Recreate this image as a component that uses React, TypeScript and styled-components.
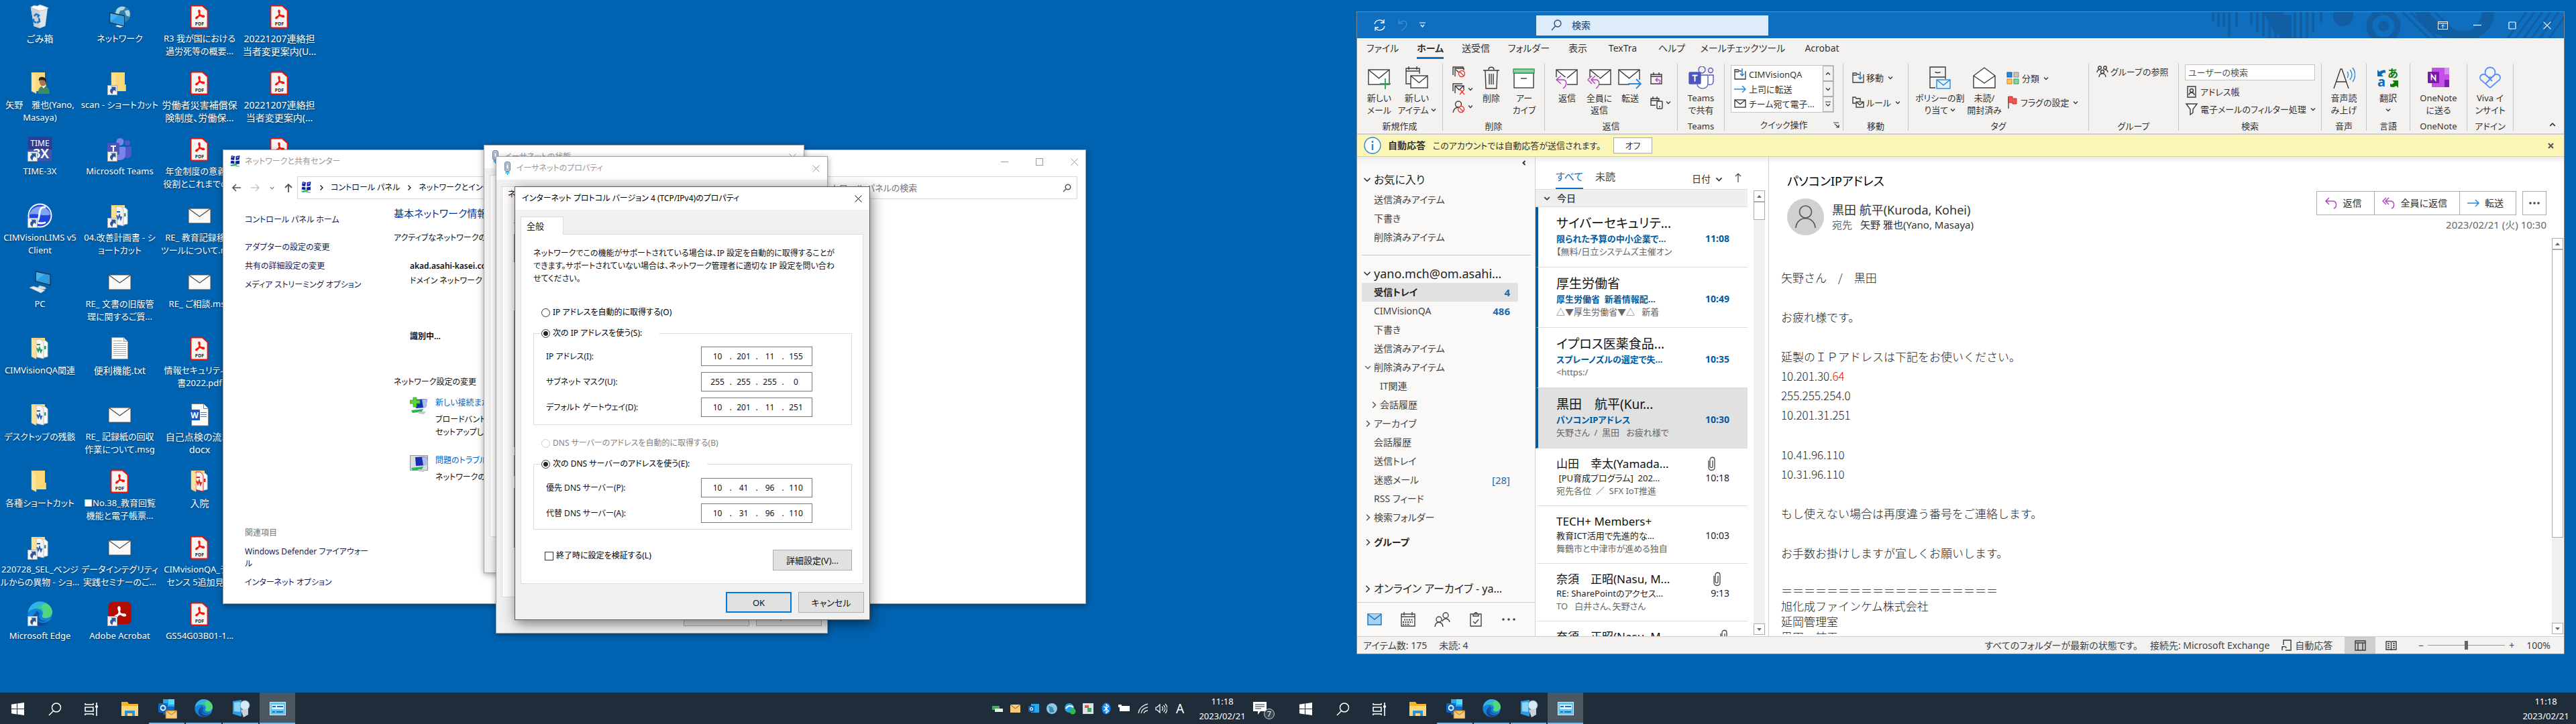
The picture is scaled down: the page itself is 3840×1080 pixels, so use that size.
import React from 'react';
import styled, { createGlobalStyle, css } from 'styled-components';

const Global = createGlobalStyle`
  * { box-sizing: border-box; }
  html, body { margin: 0; padding: 0; height: 100%; }
  body {
    font-family: "Noto Sans", "Noto Sans CJK JP", sans-serif;
    font-size: 13px;
    line-height: 18px;
    font-feature-settings: "palt";
    color: #111;
    overflow: hidden;
  }
  button, input, select { font: inherit; font-feature-settings: inherit; color: inherit; margin: 0; padding: 0; border: 0; border-radius: 0; background: none; }
  p, h1, h2, h3, ul, dl { margin: 0; padding: 0; font-size: inherit; font-weight: inherit; }
  li { list-style: none; }
  a { color: inherit; text-decoration: none; }
  svg { display: block; flex: none; }
`;

/* ---------- shared ---------- */

const Desktop = styled.main`
  position: relative;
  display: flex;
  flex-direction: column;
  height: 100vh;
  background: #0063b1;
  overflow: hidden;
`;

const IconGrid = styled.ul`
  flex: 1;
  display: grid;
  grid-auto-flow: column;
  grid-template-rows: repeat(10, 99px);
  grid-auto-columns: 119px;
  min-height: 0;
`;

const Shortcut = styled.li`
  display: flex;
  flex-direction: column;
  align-items: center;
  gap: 5px;
  padding-top: 6px;
`;

const ShortcutLabel = styled.span<{ $latin?: boolean }>`
  color: #fff;
  font-size: ${p => (p.$latin ? 13 : 14)}px;
  line-height: 19px;
  white-space: pre;
  text-align: center;
  text-shadow: 0 1px 2px rgba(0, 0, 0, 0.5);
`;

const Row = styled.div<{ $gap?: number; $h?: number; $align?: string; $justify?: string; $pad?: string }>`
  display: flex;
  align-items: ${p => p.$align ?? 'center'};
  justify-content: ${p => p.$justify ?? 'flex-start'};
  gap: ${p => p.$gap ?? 0}px;
  padding: ${p => p.$pad ?? '0'};
  ${p => p.$h && css`height: ${p.$h}px;`}
`;

/* ---------- desktop icons ---------- */

const Arrow = () => (
  <g>
    <rect x="0.5" y="22.5" width="14" height="14" fill="#f4f4f4" stroke="#a9a9a9" />
    <path d="M5 24.500h7.500v7l-2.400-2.200c-2 1.700-2.600 3.700-2.300 6.200-5-2.800-4.700-7.200-.6-9.300z" fill="#2b5797" />
  </g>
);

const Ico37 = ({ children, link }: { children: React.ReactNode; link?: boolean }) => (
  <svg width="37" height="37" viewBox="0 0 37 37" aria-hidden="true">
    {children}
    {link && <Arrow />}
  </svg>
);

const AcroMark = ({ c = '#fa0f00', x = 0, y = 0, k = 1 }: { c?: string; x?: number; y?: number; k?: number }) => (
  <path
    transform={`translate(${x} ${y}) scale(${k})`}
    fill="none"
    stroke={c}
    strokeWidth="1.700"
    strokeLinejoin="round"
    d="M6.500 1c-1.400 0-1 3 .4 5.500 1.400 2.600 3.600 4.600 5.600 4.800 2 .1 2-1.500.2-1.900-2.600-.5-7.300.3-9.600 1.500-2.200 1.200-2.200 3-.8 2.700C4 13.200 6 9.400 6.900 6.500 7.600 4 7.700 1 6.500 1z"
  />
);

const Pdf = ({ link }: { link?: boolean }) => (
  <Ico37 link={link}>
    <path d="M8 2.500h14.500l8 7V34a1.500 1.500 0 0 1-1.500 1.500H8A2.500 2.500 0 0 1 5.500 33V5A2.500 2.500 0 0 1 8 2.500z" fill="#f7f5f4" stroke="#f40f02" strokeWidth="1.800" />
    <AcroMark x={11.5} y={8} k={1} />
    <text x="18.500" y="31.500" fontSize="7" fontWeight="700" textAnchor="middle" fill="#2c2c2c" fontFamily="Noto Sans, sans-serif">PDF</text>
  </Ico37>
);

const Mail = () => (
  <Ico37>
    <rect x="2" y="8" width="33" height="22" fill="#fafafa" stroke="#4a4a4a" />
    <path d="M2 8l16.500 12L35 8" fill="none" stroke="#4a4a4a" strokeWidth="1.200" />
  </Ico37>
);

const Folder = ({ kind, link }: { kind?: 'user' | 'green' | 'blue' | 'red'; link?: boolean }) => {
  const c = kind === 'green' ? '#1f9d57' : kind === 'red' ? '#e2231a' : '#2b5fb4';
  return (
    <Ico37 link={link}>
      <path d="M6 3h20v18h1.500v10H6z" fill="#f7cf6b" />
      <path d="M6 3h20v18h1.500v10H12z" fill="#fbd978" />
      {kind && kind !== 'user' && (
        <g>
          <path d="M20 7h6.500l3.500 3v21l-9 2z" fill="#fdfdfd" stroke="#c9c9c9" />
          <path d="M13 5h7l4 5v24l-11-2.500z" fill="#f5f5f5" stroke={kind === 'red' ? '#e2231a' : '#bdbdbd'} />
          <path d="M14 18l2 5 2-5 2 6 1.500-4M14 13h5" stroke={c} strokeWidth="2" fill="none" />
          <path d="M25 15h2.500v5H25z" fill={kind === 'blue' ? '#2f9d62' : c} />
        </g>
      )}
      <path d="M6 3l7 4v27.500L6 31z" fill="#fbe19a" stroke="#eec75f" strokeWidth="0.500" />
      {kind === 'user' && (
        <g>
          <path d="M16 35c-1-8 4-12 8-12s9 3 9 12z" fill="#3f8a5f" />
          <path d="M21 23l3 4 3-4z" fill="#fff" />
          <ellipse cx="23" cy="17" rx="5" ry="6.500" fill="#a9744f" />
          <path d="M17 16c-1-6 3-7 6.500-6s5.500 4 4 9l-2-4c-3 0-6-2-8.500 1z" fill="#2b2320" />
        </g>
      )}
    </Ico37>
  );
};

const Bin = () => (
  <Ico37>
    <path d="M5 6l25 .5-3.500 26.500-8 3-9-3z" fill="#dfe4e8" />
    <path d="M5 6l13 3v27l-8.500-3z" fill="#c9d0d6" />
    <path d="M4.500 5l5-3 5 1 4-2 6 2 7 3-7 3-7 1z" fill="#fafbfc" stroke="#aab2b8" strokeWidth="0.600" />
    <path d="M10 18l3-3 4 2-2 3M17 21l1 5-4 2M9 22l0 4 4 2" stroke="#1577c9" strokeWidth="2.600" fill="none" />
  </Ico37>
);

const Monitor = ({ x = 0, y = 0 }: { x?: number; y?: number }) => (
  <g transform={`translate(${x} ${y})`}>
    <path d="M0 0l23 5v17L0 16z" fill="#22303a" />
    <path d="M1.300 1.800l20.400 4.500v13.800L1.300 15z" fill="#43b3f0" />
    <path d="M1.300 15L14 4.600l7.700 1.700v13.800z" fill="#2c9be4" />
  </g>
);

const NetworkIcon = () => (
  <Ico37>
    <circle cx="22.500" cy="15.500" r="12" fill="#2f7fa8" />
    <path d="M14 8c4-5 9-5 13-3l-3 4-5 1-2 5-5-1zM26 10l6-1c2 3 2 7 1 10l-5-2z" fill="#a9d9df" />
    <path d="M12 33l8-5 5 2v3l-6 2z" fill="#e4e8ea" />
    <Monitor x={3} y={12} />
  </Ico37>
);

const PcIcon = () => (
  <Ico37>
    <Monitor x={11.5} y={2} />
    <path d="M18 24l8 2 2 3-8 1-6-2z" fill="#d5dade" />
    <path d="M3 27l6-2 17 6-6 4z" fill="#e8ecee" stroke="#aab2b8" strokeWidth="0.600" />
  </Ico37>
);

const TxtIcon = () => (
  <Ico37>
    <path d="M6.500 2.500h18l6 6v26h-24z" fill="#fbfbfb" stroke="#9a9a9a" />
    <path d="M24.500 2.500v6h6" fill="#e3e3e3" stroke="#9a9a9a" />
    <path d="M9 7.500h13M9 11.500h19M9 14.500h19M9 17.500h19M9 20.500h19M9 23.500h19M9 26.500h19M9 29.500h19" stroke="#a8adb0" />
  </Ico37>
);

const WordIcon = () => (
  <Ico37>
    <path d="M6.500 2.500h18l7 7v25.500h-25z" fill="#fdfdfd" stroke="#7d7d7d" />
    <path d="M24.500 2.500v7h7" fill="#fff" stroke="#7d7d7d" />
    <path d="M20 15.500h9M20 18.500h9M20 21.500h9" stroke="#3c7bd4" />
    <rect x="3" y="11" width="16" height="16" rx="1" fill="#185abd" />
    <text x="11" y="23.500" fontSize="12" fontWeight="700" textAnchor="middle" fill="#fff" fontFamily="Noto Sans, sans-serif">W</text>
  </Ico37>
);

const TimeIcon = () => (
  <Ico37 link>
    <rect x="0.500" y="0.500" width="36" height="36" fill="#323c8e" />
    <rect x="1" y="19" width="35.500" height="17.500" fill="#4058ac" />
    <text x="18.500" y="14" fontSize="12" textAnchor="middle" fill="#fff" fontFamily="Noto Sans, sans-serif">TIME</text>
    <text x="20" y="32" fontSize="20" fontWeight="600" textAnchor="middle" fill="#fff" fontFamily="Noto Sans, sans-serif">3X</text>
  </Ico37>
);

const TeamsShape = () => (
  <g>
    <circle cx="19" cy="7.500" r="5.500" fill="#7b83eb" />
    <circle cx="30" cy="9" r="4" fill="#5059c9" />
    <path d="M24 15h12v10c0 5-3 7-6 7s-6-2-6-6z" fill="#5059c9" />
    <path d="M10 15h17v11c0 6-4 9-8.500 9S10 32 10 26z" fill="#7b83eb" />
    <rect x="0" y="9" width="18" height="18" rx="1.500" fill="#4b53bc" />
    <path d="M5 14h8M9 14v10" stroke="#fff" strokeWidth="2.200" />
  </g>
);

const LimsIcon = () => (
  <Ico37 link>
    <circle cx="18.500" cy="18.500" r="18" fill="#f3f6ff" />
    <circle cx="18.500" cy="18.500" r="16" fill="#2147d9" />
    <path d="M3 17a16 16 0 0 1 31 0c-8 4-22-3-31 0z" fill="#7fa4f5" />
    <path d="M26 6c-7-1-8 6-8.500 12S15 29 11 29c6 1 11 2 15 0" fill="none" stroke="#fff" strokeWidth="2.800" strokeLinecap="round" />
  </Ico37>
);

const EdgeShape = () => (
  <g>
    <circle cx="18.500" cy="18.500" r="18" fill="#1583d6" />
    <path d="M1 16C3 6 10 .5 18.500.5 29 .5 37 8 37 16c0 5-4 9-10 9-4 0-6-2-5-4 3-5-2-10-8-10C8 11 3 13 1 16z" fill="#35c1b0" />
    <path d="M24 1.500C32 4 37 10 37 16c0 5-4 9-10 9-4 0-6-2-5-4 3-5 2-9-1-12z" fill="#5fe06a" opacity="0.700" />
    <path d="M1 16C3 7 10 .5 18 .5c4 0 8 1 11 3C20 3 12 6 8 12c-3 0-5 2-7 4z" fill="#2fb0f0" />
    <path d="M14 17c-4 8 3 17 12 15 3-.5 5-2 7-4-3 6-9 9-15 8.500C9 35 6 27 9 21c1-2 3-3.500 5-4z" fill="#0f4a92" />
    <path d="M14 14c-3 2-3 8 0 12 3 4 9 6 14 3-5 1-11-2-11-7 0-2 1-3 1.500-4z" fill="#0d59a8" />
  </g>
);

const AcrobatIcon = () => (
  <Ico37 link>
    <rect x="1.500" y="1" width="34" height="33" rx="6" fill="#b30b00" />
    <AcroMark c="#fff" x={9} y={7} k={1.3} />
  </Ico37>
);

const shortcuts: { icon: React.ReactNode; text: string; latin?: boolean }[] = [
  { icon: <Bin />, text: 'ごみ箱' },
  { icon: <Folder kind="user" />, text: '矢野\u3000雅也(Yano,\nMasaya)', latin: true },
  { icon: <TimeIcon />, text: 'TIME-3X', latin: true },
  { icon: <LimsIcon />, text: 'CIMVisionLIMS v5\nClient', latin: true },
  { icon: <PcIcon />, text: 'PC', latin: true },
  { icon: <Folder kind="green" />, text: 'CIMVisionQA関連', latin: true },
  { icon: <Folder kind="blue" />, text: 'デスクトップの残骸', latin: true },
  { icon: <Folder />, text: '各種ショートカット', latin: true },
  { icon: <Folder kind="blue" link />, text: '220728_SEL_ベンジ\nルからの異物 - ショ...', latin: true },
  { icon: <Ico37 link><EdgeShape /></Ico37>, text: 'Microsoft Edge', latin: true },
  { icon: <NetworkIcon />, text: 'ネットワーク', latin: true },
  { icon: <Folder link />, text: 'scan - ショートカット', latin: true },
  { icon: <Ico37 link><TeamsShape /></Ico37>, text: 'Microsoft Teams', latin: true },
  { icon: <Folder kind="blue" link />, text: '04.改善計画書 - シ\nョートカット', latin: true },
  { icon: <Mail />, text: 'RE_ 文書の旧版管\n理に関するご質...', latin: true },
  { icon: <TxtIcon />, text: '便利機能.txt' },
  { icon: <Mail />, text: 'RE_ 記録紙の回収\n作業について.msg', latin: true },
  { icon: <Pdf />, text: '■No.38_教育回覧\n機能と電子帳票...', latin: true },
  { icon: <Mail />, text: 'データインテグリティ\n実践セミナーのご...', latin: true },
  { icon: <AcrobatIcon />, text: 'Adobe Acrobat', latin: true },
  { icon: <Pdf />, text: 'R3 我が国における\n過労死等の概要...', latin: true },
  { icon: <Pdf />, text: '労働者災害補償保\n険制度、労働保...' },
  { icon: <Pdf />, text: '年金制度の意義と\n役割とこれまでの...', latin: true },
  { icon: <Mail />, text: 'RE_ 教育記録移管\nツールについて.msg', latin: true },
  { icon: <Mail />, text: 'RE_ ご相談.msg', latin: true },
  { icon: <Pdf />, text: '情報セキュリティ白\n書2022.pdf', latin: true },
  { icon: <WordIcon />, text: '自己点検の流れ.\ndocx' },
  { icon: <Folder kind="red" />, text: '入院' },
  { icon: <Pdf />, text: 'CIMvisionQA_ライ\nセンス 5追加見積', latin: true },
  { icon: <Pdf />, text: 'GS54G03B01-1...', latin: true },
  { icon: <Pdf />, text: '20221207連絡担\n当者変更案内(U...' },
  { icon: <Pdf />, text: '20221207連絡担\n当者変更案内(...' },
  { icon: <Pdf />, text: '' },
];

/* ---------- classic windows ---------- */

const Win = styled.section<{ $x: number; $y: number; $w: number; $h: number; $active?: boolean; $bg?: string }>`
  position: absolute;
  left: ${p => p.$x}px;
  top: ${p => p.$y}px;
  width: ${p => p.$w}px;
  height: ${p => p.$h}px;
  display: flex;
  flex-direction: column;
  background: ${p => p.$bg ?? '#f0f0f0'};
  border: 1px solid ${p => (p.$active ? '#5a5a5a' : '#a0a4a8')};
  box-shadow: ${p => (p.$active ? '2px 5px 18px rgba(0,0,0,.5)' : '0 2px 9px rgba(0,0,0,.38)')};
  font-size: 12px;
  white-space: nowrap;
`;

const TitleBar = styled.header<{ $dim?: boolean; $pad?: number }>`
  display: flex;
  align-items: center;
  flex: none;
  gap: 6px;
  height: 34px;
  padding: 0 10px 0 ${p => p.$pad ?? 9}px;
  background: #fff;
  color: ${p => (p.$dim ? '#999' : '#000')};
  h2 { flex: 1; }
`;

const GlyphButton = styled.button`
  display: grid;
  place-items: center;
  width: 14px;
  height: 24px;
`;

const Cross = ({ s = 11 }: { s?: number }) => (
  <svg width={s} height={s} viewBox="0 0 11 11" fill="none" stroke="currentColor" aria-hidden="true"><path d="M.5.500l10 10M10.500.500l-10 10" /></svg>
);

const Chev = ({ d = 'down', s = 8, w = 1.3 }: { d?: 'down' | 'right' | 'left' | 'up'; s?: number; w?: number }) => (
  <svg width={s} height={s} viewBox="0 0 8 8" fill="none" stroke="currentColor" strokeWidth={w} aria-hidden="true">
    <path d={{ down: 'M1 2.500l3 3 3-3', up: 'M1 5.500l3-3 3 3', right: 'M2.500 0.500L6 4 2.500 7.500', left: 'M5.500 1l-3 3 3 3' }[d]} />
  </svg>
);

const PlugIcon = () => (
  <svg width="14" height="20" viewBox="0 0 14 20" aria-hidden="true">
    <rect x="2.500" y="0.500" width="8" height="14" rx="2.500" fill="#b5c4d4" stroke="#6f8297" />
    <rect x="5" y="4" width="3" height="7" fill="#fff" stroke="#6f8297" strokeWidth="0.600" />
    <path d="M4.500 15v3M6.500 15v5M8.500 15v3" stroke="#2fa5cf" strokeWidth="1.400" />
  </svg>
);

const NetCenter = () => (
  <svg width="17" height="18" viewBox="0 0 17 18" aria-hidden="true">
    <path d="M3 0l5 1-1 6-5-1zM9.500 1l6-1-1 6-5 1zM2.500 7.500l5 1v4l-6-1zM9 8.500l6-1v5l-6 .5z" fill="#10209a" />
    <path d="M4 1l2 .5-.5 2-2-.5zM11 2l3-.6-.5 2-2.500.6z" fill="#7f9df0" />
    <path d="M1 14l10-2 .5 3-9 1z" fill="#28c05a" />
    <path d="M10 15h5v2h-6z" fill="#b9c1c6" />
  </svg>
);

const AddressRow = styled.div`
  display: grid;
  grid-template-columns: 110px minmax(0, 1fr) 398px;
  align-items: center;
  height: 36px;
  margin-top: 4px;
  padding-right: 12px;
`;

const NavArrows = styled.div`
  display: flex;
  align-items: center;
  gap: 15px;
  padding-left: 13px;
  color: #6a6a6a;
`;

const AddressBox = styled.div`
  display: flex;
  align-items: center;
  gap: 10px;
  height: 34px;
  padding-left: 4px;
  border: 1px solid #d9d9d9;
  overflow: hidden;
`;

const SearchBox = styled.div`
  display: flex;
  align-items: center;
  height: 34px;
  padding: 0 8px;
  border: 1px solid #d9d9d9;
  color: #757575;
  input { flex: 1; min-width: 0; outline: 0; font-size: 13px; }
  input::placeholder { color: #757575; opacity: 1; }
`;

const CenterBody = styled.div`
  flex: 1;
  display: grid;
  grid-template-columns: 254px 1fr;
  min-height: 0;
`;

const SideLinks = styled.nav`
  display: flex;
  flex-direction: column;
  gap: 10px;
  padding: 21px 20px 22px 32px;
  color: #151c55;
  a { display: block; line-height: 18px; }
`;

const Push = styled.div`
  flex: 1;
`;

const Spaced = styled.div<{ $t: number; $x?: number }>`
  margin-top: ${p => p.$t}px;
  padding: 0 ${p => p.$x ?? 0}px;
`;

const Muted = styled.p`
  color: #777;
`;

const CenterMain = styled.div`
  padding-top: 10px;
  overflow: hidden;
  h3 { font-size: 15px; line-height: 20px; color: #003399; }
`;

const Strong = styled.b`
  display: block;
  font-weight: 600;
`;

const TaskRow = styled.div`
  display: grid;
  grid-template-columns: 38px 1fr;
  padding-left: 24px;
  a { color: #0066cc; }
  p { margin-top: 6px; line-height: 19px; white-space: pre; }
`;

const TaskIcon = ({ plus }: { plus?: boolean }) => (
  <svg width="28" height="30" viewBox="0 0 28 30" aria-hidden="true">
    {!plus && <rect x="0.500" y="1.500" width="26" height="22" fill="#d8dde2" stroke="#8e979e" />}
    <path d="M8 4l18-1-2 13-15 1z" fill="#1b2fae" />
    <path d="M18 4l8-1-2 13-4 .5z" fill="#a8bdf2" />
    <path d="M2 20l18-2-2 4-14 2z" fill="#27b75b" />
    <path d="M12 22l12 0-3 4-8-1z" fill="#c3c9ce" />
    {plus && <path d="M5 1h5v4h5v5h-5v5H5v-5H0V5h5z" fill="#5bd43a" stroke="#2d9a1e" strokeWidth="0.800" />}
  </svg>
);

const Sheet = styled.div<{ $pad?: string }>`
  display: flex;
  flex-direction: column;
  flex: 1;
  margin: 0 9px 0 8px;
  padding: ${p => p.$pad ?? '18px 16px 20px 18px'};
  background: #fff;
  border: 1px solid #dcdcdc;
  min-height: 0;
  overflow: hidden;
`;

const TabStrip = styled.div`
  display: flex;
  flex: none;
  height: 36px;
  padding: 10px 8px 0;
  button {
    width: 64px;
    height: 27px;
    margin-bottom: -1px;
    padding-left: 8px;
    text-align: left;
    font-size: 13px;
    background: #fff;
    border: 1px solid #dcdcdc;
    border-bottom: 0;
    z-index: 1;
  }
`;

const Explain = styled.p`
  line-height: 19px;
  white-space: pre;
`;

const Choice = styled.label<{ $off?: boolean; $ml?: number }>`
  display: flex;
  align-items: center;
  gap: 4px;
  height: 18px;
  margin-left: ${p => p.$ml ?? 0}px;
  color: ${p => (p.$off ? '#838383' : '#000')};
`;

const Radio = styled.input.attrs({ type: 'radio' })`
  appearance: none;
  width: 13px;
  height: 13px;
  border: 1px solid #333;
  border-radius: 50%;
  background: #fff;
  &:checked { background: radial-gradient(circle, #222 0 3px, #fff 4px); }
  &:disabled { border-color: #ccc; }
`;

const Check = styled.input.attrs({ type: 'checkbox' })`
  appearance: none;
  width: 13px;
  height: 13px;
  border: 1px solid #333;
  background: #fff;
`;

const Box = styled.fieldset<{ $t: number; $pad: string }>`
  min-width: 0;
  margin: ${p => p.$t}px 0 0;
  padding: ${p => p.$pad};
  border: 1px solid #dcdcdc;
  legend { margin-left: -7px; padding: 0 26px 0 0; }
`;

const AddressLine = styled.div`
  display: grid;
  grid-template-columns: 231px 166px;
  align-items: center;
  height: 29px;
  & + & { margin-top: 9px; }
`;

const Octets = styled.div`
  display: flex;
  align-items: center;
  height: 29px;
  padding: 0 8px;
  border: 1px solid #7a7a7a;
  input { width: 31px; text-align: center; }
  span { width: 8px; text-align: center; }
`;

const PushButton = styled.button<{ $w: number; $primary?: boolean }>`
  width: ${p => p.$w}px;
  height: 31px;
  font-size: 13px;
  background: #e1e1e1;
  border: ${p => (p.$primary ? '2px solid #0078d7' : '1px solid #adadad')};
`;

const Footer = styled.footer`
  display: flex;
  flex: none;
  justify-content: flex-end;
  gap: 10px;
  padding: 12px 8px 10px;
`;

const IpLine = ({ label, v }: { label: string; v: string[] }) => (
  <AddressLine>
    <span>{label}</span>
    <Octets>
      {v.map((o, i) => (
        <React.Fragment key={i}>
          {i > 0 && <span>.</span>}
          <input aria-label={`${label} ${i + 1}`} defaultValue={o} />
        </React.Fragment>
      ))}
    </Octets>
  </AddressLine>
);

const NetworkCenterWindow = () => (
  <Win $x={332} $y={223} $w={1287} $h={678} $bg="#fff">
    <TitleBar $dim>
      <NetCenter />
      <h2>ネットワークと共有センター</h2>
      <Row $gap={38}>
        <GlyphButton aria-label="最小化"><svg width="11" height="11" stroke="currentColor"><path d="M0 5.500h11" /></svg></GlyphButton>
        <GlyphButton aria-label="最大化"><svg width="11" height="11" fill="none" stroke="currentColor"><rect x="0.500" y="0.500" width="10" height="10" /></svg></GlyphButton>
        <GlyphButton aria-label="閉じる"><Cross /></GlyphButton>
      </Row>
    </TitleBar>
    <AddressRow>
      <NavArrows>
        <svg width="13" height="12" fill="none" stroke="#555" strokeWidth="1.600"><path d="M13 6H1M6 1L1 6l5 5" /></svg>
        <svg width="13" height="12" fill="none" stroke="#c8c8c8" strokeWidth="1.600"><path d="M0 6h12M7 1l5 5-5 5" /></svg>
        <Chev s={7} />
        <svg width="12" height="14" fill="none" stroke="#555" strokeWidth="1.800"><path d="M6 14V2M1 7l5-5 5 5" /></svg>
      </NavArrows>
      <AddressBox>
        <NetCenter />
        <Chev d="right" />
        <span>コントロール パネル</span>
        <Chev d="right" />
        <span>ネットワークとインターネット</span>
      </AddressBox>
      <SearchBox>
        <input aria-label="検索" placeholder="コントロール パネルの検索" />
        <svg width="13" height="13" fill="none" stroke="#555" strokeWidth="1.500"><circle cx="8" cy="5" r="3.800" /><path d="M5 8l-4 4" /></svg>
      </SearchBox>
    </AddressRow>
    <CenterBody>
      <SideLinks>
        <a href="#home">コントロール パネル ホーム</a>
        <Spaced $t={13}><a href="#adapter">アダプターの設定の変更</a></Spaced>
        <a href="#share">共有の詳細設定の変更</a>
        <a href="#media">メディア ストリーミング オプション</a>
        <Push />
        <Muted>関連項目</Muted>
        <a href="#fw">Windows Defender ファイアウォー<br />ル</a>
        <a href="#inet">インターネット オプション</a>
      </SideLinks>
      <CenterMain>
        <h3>基本ネットワーク情報の表示と接続のセットアップ</h3>
        <Spaced $t={18}>アクティブなネットワークの表示</Spaced>
        <TaskRow>
          <Spaced $t={24}>
            <Strong>akad.asahi-kasei.co.jp</Strong>
            <Spaced $t={4}>ドメイン ネットワーク</Spaced>
            <Spaced $t={65}><Strong>識別中...</Strong></Spaced>
          </Spaced>
        </TaskRow>
        <Spaced $t={50}>ネットワーク設定の変更</Spaced>
        <Spaced $t={13}>
          <TaskRow>
            <TaskIcon plus />
            <div>
              <a href="#new">新しい接続またはネットワークのセットアップ</a>
              <p>{'ブロードバンド、ダイヤルアップ\nセットアップします。'}</p>
            </div>
          </TaskRow>
        </Spaced>
        <Spaced $t={24}>
          <TaskRow>
            <TaskIcon />
            <div>
              <a href="#fix">問題のトラブルシューティング</a>
              <p>ネットワークの問題を診断</p>
            </div>
          </TaskRow>
        </Spaced>
      </CenterMain>
    </CenterBody>
  </Win>
);

const Ghost = styled.div<{ $t: number; $h: number }>`
  height: ${p => p.$h}px;
  margin-top: ${p => p.$t}px;
  border: 1px solid #828790;
  flex: none;
`;

const Ipv4Window = () => (
  <Win $x={767} $y={278} $w={530} $h={647} $active>
    <TitleBar $pad={10}>
      <h2>インターネット プロトコル バージョン 4 (TCP/IPv4)のプロパティ</h2>
      <GlyphButton aria-label="閉じる"><Cross /></GlyphButton>
    </TitleBar>
    <TabStrip><button>全般</button></TabStrip>
    <Sheet>
      <Explain>{'ネットワークでこの機能がサポートされている場合は、IP 設定を自動的に取得することが\nできます。サポートされていない場合は、ネットワーク管理者に適切な IP 設定を問い合わ\nせてください。'}</Explain>
      <Spaced $t={32}><Choice $ml={12}><Radio name="ip" />IP アドレスを自動的に取得する(O)</Choice></Spaced>
      <Box $t={13} $pad="11px 0 11px 18px">
        <legend><Choice><Radio name="ip" defaultChecked />次の IP アドレスを使う(S):</Choice></legend>
        <IpLine label="IP アドレス(I):" v={['10', '201', '11', '155']} />
        <IpLine label="サブネット マスク(U):" v={['255', '255', '255', '0']} />
        <IpLine label="デフォルト ゲートウェイ(D):" v={['10', '201', '11', '251']} />
      </Box>
      <Spaced $t={18}><Choice $off $ml={12}><Radio name="dns" disabled />DNS サーバーのアドレスを自動的に取得する(B)</Choice></Spaced>
      <Box $t={13} $pad="12px 0 9px 18px">
        <legend><Choice><Radio name="dns" defaultChecked />次の DNS サーバーのアドレスを使う(E):</Choice></legend>
        <IpLine label="優先 DNS サーバー(P):" v={['10', '41', '96', '110']} />
        <IpLine label="代替 DNS サーバー(A):" v={['10', '31', '96', '110']} />
      </Box>
      <Spaced $t={30}>
        <Row $align="flex-start" $justify="space-between">
          <Choice $ml={17}><Check />終了時に設定を検証する(L)</Choice>
          <PushButton $w={118}>詳細設定(V)...</PushButton>
        </Row>
      </Spaced>
    </Sheet>
    <Footer>
      <PushButton $w={98} $primary>OK</PushButton>
      <PushButton $w={98}>キャンセル</PushButton>
    </Footer>
  </Win>
);

/* ---------- Outlook ---------- */

const Outlook = styled.section`
  position: absolute;
  left: 2022px;
  right: 17px;
  top: 17px;
  bottom: 104px;
  display: grid;
  grid-template-rows: 39px auto auto minmax(0, 1fr) 26px;
  border: 1px solid #7d8790;
  background: #fff;
  color: #333;
  white-space: nowrap;
`;

const OutlookTitle = styled.header`
  display: grid;
  grid-template-columns: 267px minmax(100px, 346px) 1fr auto;
  align-items: center;
  background: #106ebe;
  color: #fff;
`;

const QuickAccess = styled.div`
  display: flex;
  align-items: center;
  gap: 16px;
  padding-left: 24px;
`;

const TitleSearch = styled.label`
  display: flex;
  align-items: center;
  gap: 15px;
  height: 30px;
  padding-left: 22px;
  background: #deecf9;
  color: #0c3c69;
  input { flex: 1; min-width: 0; font-size: 14px; }
  input::placeholder { color: #0c3c69; opacity: 1; }
`;

const TitleArt = styled.div`
  grid-column: 4;
  grid-row: 1;
  height: 39px;
`;

const TitleButtons = styled.div`
  grid-column: 4;
  grid-row: 1;
  display: flex;
  justify-content: flex-end;
  gap: 38px;
  padding-right: 18px;
`;

const Ribbon = styled.div`
  background: #f3f2f1;
  border-bottom: 2px solid #d2d0ce;
`;

const Tabs = styled.div`
  display: grid;
  grid-template-columns: 70px 72px 64px 94px 52px 82px 64px 148px 88px;
  height: 36px;
  padding-left: 3px;
`;

const Tab = styled.button<{ $on?: boolean }>`
  justify-self: center;
  height: 31px;
  margin-bottom: 5px;
  padding-top: 2px;
  font-size: 14px;
  font-weight: ${p => (p.$on ? 700 : 400)};
  border-bottom: 3px solid ${p => (p.$on ? '#106ebe' : 'transparent')};
`;

const Groups = styled.div`
  display: grid;
  grid-template-columns: 128px 152px 198px 70px 177px 97px 269px 134px 213px 67px 65px 85px 69px 1fr;
  height: 106px;
  padding-top: 2px;
`;

const Group = styled.section`
  display: grid;
  grid-template-rows: 78px 22px;
  height: 100px;
  border-right: 1px solid #c8c6c4;
  min-width: 0;
  & > h3 { justify-self: center; padding-top: 6px; }
`;

const Launch = styled.div`
  display: grid;
  grid-template-columns: 1fr auto 1fr;
  align-items: center;
  padding: 4px 5px 0;
  h3 { grid-column: 2; }
  button { justify-self: end; }
`;

const Cells = styled.div<{ $cols: string }>`
  display: grid;
  grid-template-columns: ${p => p.$cols};
  min-width: 0;
`;

const Big = styled.button`
  display: grid;
  grid-template-rows: 42px auto;
  justify-items: center;
  align-content: start;
  line-height: 18px;
  svg { align-self: center; }
  & > span { display: flex; flex-direction: column; align-items: center; justify-self: center; }
`;

const Stack = styled.div<{ $pt: number; $gap: number; $pl?: number }>`
  display: flex;
  flex-direction: column;
  gap: ${p => p.$gap}px;
  padding: ${p => p.$pt}px 0 0 ${p => p.$pl ?? 0}px;
  min-width: 0;
`;

const Small = styled.button`
  display: flex;
  align-items: center;
  gap: 3px;
  height: 20px;
  span { margin-right: 3px; }
`;

const Gallery = styled.div`
  display: grid;
  grid-template-columns: 1fr 16px;
  width: 154px;
  height: 71px;
  margin: 2px 0 0 9px;
  background: #fff;
  border: 1px solid #c8c6c4;
  ul { padding: 2px 0 0 4px; overflow: hidden; }
  li { display: flex; align-items: center; gap: 4px; height: 22px; }
`;

const Spinner = styled.div`
  display: grid;
  grid-template-rows: 1fr 1fr 1fr;
  background: #f3f2f1;
  button { display: grid; place-items: center; border: 1px solid #a9a9a9; }
`;

const PeopleInput = styled.input`
  width: 100%;
  height: 24px;
  padding: 0 4px;
  background: #fff;
  border: 1px solid #c8c6c4;
  &::placeholder { color: #555; opacity: 1; }
`;

const InfoBar = styled.div`
  display: flex;
  align-items: center;
  height: 33px;
  padding: 0 12px 0 10px;
  background: #fcf6b6;
  border-bottom: 1px solid #d8d38c;
  b { margin: 0 11px 0 10px; font-weight: 600; font-size: 14px; }
  p { flex: none; min-width: 269px; }
  button { width: 58px; height: 24px; background: #fff; border: 1px solid #ababab; }
  button:last-child { width: 12px; margin-left: auto; background: none; border: 0; }
`;

const Panes = styled.div`
  display: grid;
  grid-template-columns: 266px 348px minmax(0, 1fr);
  min-height: 0;
  background: linear-gradient(#ececea, #fff 10px);
`;

const FolderPane = styled.nav`
  display: flex;
  flex-direction: column;
  background: linear-gradient(#ecebe9, #faf9f8 10px);
  border-right: 1px solid #d2d0ce;
  min-height: 0;
`;

const FolderRow = styled.a<{ $on?: boolean; $indent?: number; $h?: number; $size?: number; $bold?: boolean }>`
  display: grid;
  grid-template-columns: ${p => 18 + (p.$indent ?? 0)}px 1fr auto;
  align-items: center;
  flex: none;
  height: ${p => p.$h ?? 28}px;
  margin: 0 25px 0 7px;
  padding-right: 12px;
  background: ${p => (p.$on ? '#e1e1e1' : 'none')};
  font-size: ${p => p.$size ?? 14}px;
  font-weight: ${p => (p.$on || p.$bold ? 700 : 400)};
  color: ${p => (p.$on || p.$bold || p.$size ? '#252423' : '#444')};
  & > svg { justify-self: end; margin-right: 4px; }
`;

const Count = styled.em<{ $plain?: boolean }>`
  font-style: normal;
  font-size: 15px;
  font-weight: ${p => (p.$plain ? 400 : 700)};
  color: #1f66b1;
`;

const Rule = styled.hr`
  width: 252px;
  margin: 12px 0 13px 7px;
  border: 0;
  border-top: 1px solid #c8c6c4;
  flex: none;
`;

const Modules = styled.div`
  display: flex;
  align-items: center;
  gap: 28px;
  flex: none;
  height: 51px;
  padding-left: 15px;
  border-top: 1px solid #d2d0ce;
  color: #444;
`;

const ListPane = styled.section`
  display: grid;
  grid-template-columns: 316px 1fr;
  border-right: 1px solid #d2d0ce;
  min-height: 0;
`;

const ListColumn = styled.div`
  display: flex;
  flex-direction: column;
  min-height: 0;
  overflow: hidden;
`;

const ListScroll = styled.div`
  display: grid;
  padding: 50px 0 2px 9px;
`;

const ListHead = styled.div`
  display: flex;
  align-items: flex-end;
  flex: none;
  height: 49px;
  padding: 0 9px 0 30px;
  border-bottom: 1px solid #dcdcdc;
  font-size: 15px;
`;

const Filter = styled.button<{ $on?: boolean }>`
  height: 30px;
  margin-right: 18px;
  padding-bottom: 6px;
  color: ${p => (p.$on ? '#106ebe' : '#444')};
  border-bottom: 2px solid ${p => (p.$on ? '#106ebe' : 'transparent')};
`;

const Sort = styled.button`
  display: flex;
  align-items: center;
  gap: 7px;
  height: 30px;
  margin-left: auto;
  font-size: 14px;
`;

const DayHead = styled.h3`
  display: flex;
  align-items: center;
  gap: 10px;
  flex: none;
  height: 26px;
  padding-left: 12px;
  background: #efefef;
  border-bottom: 1px solid #dcdcdc;
  && { font-size: 14px; font-weight: 500; }
`;

const Message = styled.article<{ $unread?: boolean; $on?: boolean }>`
  display: grid;
  grid-template-columns: 1fr auto;
  align-content: start;
  align-items: center;
  flex: none;
  height: ${p => (p.$unread ? 90 : 86)}px;
  padding: 10px 27px 0 27px;
  background: ${p => (p.$on ? '#e1e1e1' : 'none')};
  border-left: 4px solid ${p => (p.$unread ? '#005ba1' : 'transparent')};
  border-bottom: 1px solid #dcdcdc;
  h4, p { margin: 0; font-weight: 400; }
  h4 { font-size: ${p => (p.$unread ? 19 : 17)}px; line-height: ${p => (p.$unread ? 28 : 25)}px; color: #111; grid-column: 1; }
  p { font-size: 13px; line-height: 18px; white-space: pre; }
  ${p => p.$unread ? css`p, time { color: #005ba1; font-weight: 700; }` : css`p, time { color: #222; }`}
  time { font-size: 14px; line-height: 18px; }
  small { grid-column: 1; font-size: 13px; line-height: 20px; color: #666; white-space: pre; }
`;

const ScrollBar = styled.div<{ $thumb: number }>`
  display: grid;
  grid-template-rows: 17px ${p => p.$thumb}px 1fr 17px;
  width: 17px;
  background: #f1f1f1;
  color: #666;
  button, i { display: grid; place-items: center; background: #fff; border: 1px solid #ababab; }
  button:last-child { grid-row: 4; }
`;

const Tri = ({ down }: { down?: boolean }) => (
  <svg width="7" height="4" aria-hidden="true"><path d={down ? 'M0 0h7L3.500 4z' : 'M0 4h7L3.500 0z'} fill="#666" /></svg>
);

const Scroll = ({ thumb }: { thumb: number }) => (
  <ScrollBar $thumb={thumb}>
    <button aria-label="上へ"><Tri /></button>
    <i />
    <button aria-label="下へ"><Tri down /></button>
  </ScrollBar>
);

const Reading = styled.section`
  display: grid;
  grid-template-rows: auto minmax(0, 1fr);
  min-height: 0;
  overflow: hidden;
`;

const ReadHead = styled.header`
  display: grid;
  grid-template-columns: 67px 1fr auto;
  padding: 24px 26px 0 27px;
  h2 { grid-column: 1 / -1; font-size: 18px; line-height: 24px; color: #000; }
`;

const Avatar = styled.div`
  padding-top: 14px;
`;

const Who = styled.div`
  padding-top: 19px;
  p { font-size: 18px; line-height: 24px; }
  span { font-size: 15px; line-height: 20px; margin-right: 12px; color: #666; }
  span + span { color: #333; }
`;

const Actions = styled.div`
  display: flex;
  gap: 9px;
  justify-content: flex-end;
  margin-top: 3px;
`;

const ActionSet = styled.div<{ $tight?: boolean }>`
  display: flex;
  border: 1px solid #ababab;
  height: 36px;
  font-size: 14px;
  button { display: flex; align-items: center; gap: 8px; padding: ${p => (p.$tight ? '0 8px' : '0 18px 0 11px')}; }
  button + button { border-left: 1px solid #ababab; }
`;

const When = styled.time`
  display: block;
  text-align: right;
  font-size: 15px;
  line-height: 28px;
  color: #666;
`;

const ReadBody = styled.div`
  display: grid;
  grid-template-columns: 1fr 17px;
  margin: 4px 1px 3px 0;
  min-height: 0;
`;

const Letter = styled.div`
  padding: 44px 0 0 18px;
  overflow: hidden;
  color: #222;
  font-family: "Noto Sans CJK JP", sans-serif;
  font-weight: 300;
  font-size: 17px;
  line-height: 29px;
  font-feature-settings: normal;
  p { white-space: pre; margin-bottom: 30px; }
  mark { background: none; color: #f00; }
`;

const Signature = styled.p`
  line-height: 23px;
`;

const StatusBar = styled.footer`
  display: flex;
  align-items: center;
  gap: 18px;
  padding: 0 20px 0 9px;
  background: #f3f2f1;
  border-top: 1px solid #d2d0ce;
  color: #444;
  font-size: 14px;
`;

const ViewButton = styled.button<{ $on?: boolean }>`
  display: grid;
  place-items: center;
  width: 46px;
  height: 25px;
  background: ${p => (p.$on ? '#d0cecd' : 'none')};
`;

const Zoom = styled.input.attrs({ type: 'range' })`
  appearance: none;
  width: 115px;
  height: 16px;
  background: linear-gradient(#999, #999) center / 100% 1px no-repeat;
  &::-webkit-slider-thumb { appearance: none; width: 5px; height: 13px; background: #666; }
`;

const Ink = '#3b3a39';

const G = ({ w = 32, h = 34, children }: { w?: number; h?: number; children: React.ReactNode }) => (
  <svg width={w} height={h} viewBox={`0 0 ${w} ${h}`} fill="none" stroke={Ink} strokeWidth="1.400" aria-hidden="true">{children}</svg>
);

const Env = ({ x = 1, y = 5, w = 31, h = 22 }: { x?: number; y?: number; w?: number; h?: number }) => (
  <g>
    <rect x={x} y={y} width={w} height={h} fill="#fff" />
    <path d={`M${x} ${y}l${w / 2} ${h * 0.58} ${w / 2}-${h * 0.58}`} />
  </g>
);

const Ban = ({ x, y }: { x: number; y: number }) => (
  <g stroke="#e8322f"><circle cx={x} cy={y} r="4.500" fill="#fff" /><path d={`M${x - 3} ${y - 3}l6 6`} /></g>
);

const Art = () => (
  <svg width="526" height="39" viewBox="0 0 526 39" aria-hidden="true">
    <g stroke="#115ea3" strokeWidth="4">
      <path d="M3 0v14M11 0v22M19 0v22M27 0v37M38 0v22" />
      <path d="M60 0v19M69 0v30M78 0v36M87 0v39M96 0v39M105 0v34M125 0v39M134 0v39M143 0v39M152 0v30M164 0v15" />
      <path d="M285 0l40 39M297 0l40 39M309 0l40 39M321 0l40 39M333 0l34 33" strokeWidth="3" />
      <path d="M470 0l-28 39M482 0l-28 39M494 0l-28 39M506 0l-28 39M518 0l-28 39M526 8l-22 31" strokeWidth="3" />
    </g>
    <path d="M78 0h30v38l-14-8-16-30zM96 4h24v35h-18z" fill="#115ea3" />
    <circle cx="197" cy="6" r="15" fill="#115ea3" />
    <circle cx="257" cy="21" r="21" fill="none" stroke="#115ea3" strokeWidth="9" />
    <circle cx="257" cy="21" r="8" fill="#115ea3" />
    <path d="M304 0c6 24 30 36 58 39h32c20-8 28-22 28-39h-18c-2 18-12 28-28 28S334 18 326 0z" fill="#115ea3" />
  </svg>
);

const folders: { t: string; n?: string; plain?: boolean; on?: boolean; indent?: number; chev?: 'down' | 'right' }[] = [
  { t: '受信トレイ', n: '4', on: true },
  { t: 'CIMVisionQA', n: '486' },
  { t: '下書き' },
  { t: '送信済みアイテム' },
  { t: '削除済みアイテム', chev: 'down' },
  { t: 'IT関連', indent: 9 },
  { t: '会話履歴', indent: 9, chev: 'right' },
  { t: 'アーカイブ', chev: 'right' },
  { t: '会話履歴' },
  { t: '送信トレイ' },
  { t: '迷惑メール', n: '[28]', plain: true },
  { t: 'RSS フィード' },
  { t: '検索フォルダー', chev: 'right' },
];

const messages: { from: string; sub: string; pre: string; at: string; unread?: boolean; on?: boolean; clip?: boolean }[] = [
  { from: 'サイバーセキュリテ...', sub: '限られた予算の中小企業で...', pre: '【無料/日立システムズ主催オン', at: '11:08', unread: true },
  { from: '厚生労働省', sub: '厚生労働省  新着情報配...', pre: '△▼厚生労働省▼△   新着', at: '10:49', unread: true },
  { from: 'イプロス医薬食品...', sub: 'スプレーノズルの選定で失...', pre: '<https:/', at: '10:35', unread: true },
  { from: '黒田\u3000航平(Kur...', sub: 'パソコンIPアドレス', pre: '矢野さん  /  黒田   お疲れ様で', at: '10:30', unread: true, on: true },
  { from: '山田\u3000幸太(Yamada...', sub: ' [PU育成プログラム]  202...', pre: '宛先各位  ／  SFX IoT推進', at: '10:18', clip: true },
  { from: 'TECH+ Members+', sub: '教育ICT活用で先進的な...', pre: '舞鶴市と中津市が進める独自', at: '10:03' },
  { from: '奈須\u3000正昭(Nasu, M...', sub: 'RE: SharePointのアクセス...', pre: 'TO   白井さん、矢野さん', at: '9:13', clip: true },
  { from: '奈須\u3000正昭(Nasu, M...', sub: '', pre: '', at: '', clip: true },
];

const ReplyIco = ({ all }: { all?: boolean }) => (
  <svg width="20" height="18" viewBox="0 0 20 18" fill="none" stroke="#b146c2" strokeWidth="1.500" aria-hidden="true">
    {all && <path d="M6 1L1 6l5 5" />}
    <path d={all ? 'M10 1L5 6l5 5M5 6h7c7 0 7 9 2 11' : 'M7 1L2 6l5 5M2 6h10c7 0 7 9 2 11'} />
  </svg>
);

const FwdIco = ({ w = 18 }: { w?: number }) => (
  <svg width={w} height="12" viewBox="0 0 18 12" fill="none" stroke="#2b88d8" strokeWidth="1.500" aria-hidden="true"><path d="M0 6h17M12 1l5 5-5 5" /></svg>
);

const MoveIco = () => (
  <svg width="18" height="18" viewBox="0 0 18 18" fill="none" stroke={Ink} strokeWidth="1.300" aria-hidden="true">
    <path d="M11 4H8L6 2H1v14h16V4M1 5h6" /><path d="M12 0v11M9 8l3 3 3-3" stroke="#2b88d8" strokeWidth="1.600" />
  </svg>
);

const OutlookWindow = () => (
  <Outlook>
    <OutlookTitle>
      <QuickAccess>
        <svg width="19" height="19" viewBox="0 0 19 19" fill="none" stroke="#fff" strokeWidth="1.300"><path d="M2 8a7.500 7.500 0 0 1 14-2M16 1v5h-5M17 11a7.500 7.500 0 0 1-14 2M3 18v-5h5" /></svg>
        <svg width="18" height="18" viewBox="0 0 18 18" fill="none" stroke="#3f8fd6" strokeWidth="1.300"><path d="M3 0v6h6M3 6c4-5 12-5 12 1 0 4-4 6-8 10" /></svg>
        <svg width="9" height="9" fill="none" stroke="#fff" strokeWidth="1.200"><path d="M0 1h9M2 4l2.500 3L7 4" /></svg>
      </QuickAccess>
      <TitleSearch>
        <svg width="16" height="17" fill="none" stroke="#1a4a7a" strokeWidth="1.300"><circle cx="10" cy="6" r="5" /><path d="M6.500 10L1 16" /></svg>
        <input placeholder="検索" aria-label="検索" />
      </TitleSearch>
      <TitleArt><Art /></TitleArt>
      <TitleButtons>
        <GlyphButton aria-label="リボンの表示"><svg width="15" height="12" fill="none" stroke="#fff"><rect x="0.500" y="0.500" width="14" height="11" /><path d="M0 3h15M7.500 10V5M5 7.500L7.500 5 10 7.500" /></svg></GlyphButton>
        <GlyphButton aria-label="最小化"><svg width="12" height="12" stroke="#fff" strokeWidth="1.200"><path d="M0 5.500h12" /></svg></GlyphButton>
        <GlyphButton aria-label="最大化"><svg width="12" height="12" fill="none" stroke="#fff" strokeWidth="1.200"><rect x="1" y="1" width="10" height="10" rx="1" /></svg></GlyphButton>
        <GlyphButton aria-label="閉じる"><Cross s={12} /></GlyphButton>
      </TitleButtons>
    </OutlookTitle>

    <Ribbon>
      <Tabs>
        {['ファイル', 'ホーム', '送受信', 'フォルダー', '表示', 'TexTra', 'ヘルプ', 'メールチェックツール', 'Acrobat'].map(t => (
          <Tab key={t} $on={t === 'ホーム'}>{t}</Tab>
        ))}
      </Tabs>
      <Groups>
        <Group>
          <Cells $cols="6px 54px 58px">
            <i />
            <Big><G w={35}><Env /><path d="M26 18v16M18 26h16" stroke="#2f9e5b" strokeWidth="1.800" /></G><span>新しい<br />メール</span></Big>
            <Big><G w={34}><path d="M8 26H1V3h20v8M1 7h20M5 0v5M17 0v5" /><Env x={8} y={14} w={25} h={18} /></G><span>新しい<Row $gap={3}>アイテム<Chev /></Row></span></Big>
          </Cells>
          <h3>新規作成</h3>
        </Group>
        <Group>
          <Cells $cols="44px 56px 42px">
            <Stack $pt={2} $gap={6} $pl={14}>
              <Small aria-label="無視"><G w={20} h={18}><path d="M1 14V2h15v3M4 16V4h13v3" /><path d="M5 6l6 5" /><Ban x={14} y={12} /></G></Small>
              <Small aria-label="クリーンアップ"><G w={20} h={18}><path d="M1 12V1h14M4 15V4h13v5M4 4l6 6 7-6" /><path d="M11 9l7 8M18 9l-7 8" stroke="#e8322f" /></G><Chev /></Small>
              <Small aria-label="迷惑メール"><G w={20} h={19}><circle cx="9" cy="5.500" r="4.500" /><path d="M1 18c1-5 4-8 8-8" /><Ban x={13} y={13} /></G><Chev /></Small>
            </Stack>
            <Big><G w={26}><path d="M4 6l1 27h16l1-27M1 6h24M9 5c0-5 8-5 8 0M10 11v16M13 11v16M16 11v16" /></G><span>削除</span></Big>
            <Big><G w={34}><rect x="2" y="10" width="29" height="22" fill="#fff" /><path d="M1 4h31v6H1z" fill="#8fd0a4" stroke="#2f9e5b" /><path d="M12 18h9" /></G><span>アー<br />カイブ</span></Big>
          </Cells>
          <h3>削除</h3>
        </Group>
        <Group>
          <Cells $cols="8px 50px 46px 46px 48px">
            <i />
            <Big><G w={34}><Env /><path d="M0 16h17v18H0z" fill="#f3f2f1" stroke="none" /><path d="M8 14l-7 6 7 6M1 20h9c8 0 7 9 1 13" stroke="#b146c2" /></G><span>返信</span></Big>
            <Big><G w={36}><Env x={4} /><path d="M0 16h18v18H0z" fill="#f3f2f1" stroke="none" /><path d="M7 14l-6 6 6 6M12 14l-6 6 6 6M6 20h6c8 0 7 9 1 13" stroke="#b146c2" /></G><span>全員に<br />返信</span></Big>
            <Big><G w={36}><Env /><path d="M17 20h18v12H17z" fill="#f3f2f1" stroke="none" /><path d="M15 26h19M27 19l7 7-7 7" stroke="#2b88d8" strokeWidth="1.800" /></G><span>転送</span></Big>
            <Stack $pt={12} $gap={16} $pl={7}>
              <Small aria-label="会議"><G w={19} h={19}><path d="M1 3h16v14H1zM1 6h16M5 0v4M13 0v4" /><path d="M11 8l-3 3 3 3M8 11h4c4 0 3 5 0 6" stroke="#b146c2" /></G></Small>
              <Small aria-label="その他"><G w={20} h={19}><path d="M8 13H1V3h12v3M1 6h12M4 0v4M10 0v4" /><rect x="10" y="7" width="8" height="11" rx="1" /><path d="M13 15h2" /></G><Chev /></Small>
            </Stack>
          </Cells>
          <h3>返信</h3>
        </Group>
        <Group>
          <Cells $cols="1fr">
            <Big>
              <svg width="38" height="34" viewBox="0 0 38 34" fill="none" stroke="#5059c9" strokeWidth="1.400"><circle cx="20" cy="5" r="5" /><circle cx="33" cy="6" r="3.500" /><path d="M18 13h11v13c0 9-15 9-16 1M30 13h7v9c0 5-4 6-7 5" fill="#fff" /><rect x="1" y="9" width="17" height="17" rx="1" fill="#4b53bc" /><path d="M5.500 13.500h8M9.500 13.500v9" stroke="#fff" strokeWidth="2" /></svg>
              <span>Teams<br />で共有</span>
            </Big>
          </Cells>
          <h3>Teams</h3>
        </Group>
        <Group>
          <Gallery>
            <ul>
              <li><MoveIco />CIMVisionQA</li>
              <li><FwdIco />上司に転送</li>
              <li><G w={18} h={14}><Env x={1} y={1} w={16} h={11} /></G>チーム宛て電子…</li>
            </ul>
            <Spinner>
              <button aria-label="前へ"><Chev d="up" /></button>
              <button aria-label="次へ"><Chev /></button>
              <button aria-label="その他"><svg width="8" height="9" fill="none" stroke="currentColor" strokeWidth="1.200"><path d="M0 1h8M1 4l3 3 3-3" /></svg></button>
            </Spinner>
          </Gallery>
          <Launch>
            <h3>クイック操作</h3>
            <button aria-label="クイック操作の管理"><svg width="9" height="9" fill="none" stroke={Ink} strokeWidth="1.200"><path d="M0 1h8M8 4v4H4M2 3l6 5" /></svg></button>
          </Launch>
        </Group>
        <Group>
          <Stack $pt={11} $gap={17} $pl={13}>
            <Small><MoveIco /><span>移動</span><Chev /></Small>
            <Small><G w={18} h={18}><path d="M5 10H1V1h4l1 2h6v4" /><Env x={6} y={8} w={11} h={8} /></G><span>ルール</span><Chev /></Small>
          </Stack>
          <h3>移動</h3>
        </Group>
        <Group>
          <Cells $cols="10px 70px 66px 1fr">
            <i />
            <Big><G w={33}><path d="M10 32H2V1h23v18M2 16h23M10 8c0 2 7 2 7 0" /><g stroke="#2b88d8"><rect x="12" y="20" width="20" height="13" fill="#e6f2fb" /><path d="M12 20l10 8 10-8" /></g></G><span>ポリシーの割<Row $gap={3}>り当て<Chev /></Row></span></Big>
            <Big><G w={34}><path d="M1 14v18h32V14L17 2z" fill="#fff" /><path d="M1 14l16 11 16-11" /></G><span>未読/<br />開封済み</span></Big>
            <Stack $pt={12} $gap={16}>
              <Small>
                <svg width="20" height="20"><rect x="1" y="1" width="7" height="7" fill="#2b88d8" stroke="#005a9e" /><rect x="11" y="1" width="7" height="7" fill="#c8c6c4" stroke="#8a8886" /><rect x="1" y="11" width="7" height="7" fill="#f9c86b" stroke="#e07b00" /><rect x="11" y="11" width="7" height="7" fill="#8fd0a4" stroke="#2f9e5b" /></svg>
                <span>分類</span><Chev />
              </Small>
              <Small>
                <svg width="18" height="20"><path d="M3 1v18" stroke={Ink} strokeWidth="1.300" /><path d="M3 1h6v3h6v8H9v-2H3z" fill="#f25555" stroke="#c62828" /></svg>
                <span>フラグの設定</span><Chev />
              </Small>
            </Stack>
          </Cells>
          <h3>タグ</h3>
        </Group>
        <Group>
          <Stack $pt={2} $gap={0} $pl={11}>
            <Small><G w={18} h={18}><circle cx="5" cy="3" r="2.300" /><circle cx="13" cy="3" r="2.300" /><circle cx="9" cy="9" r="2.500" /><path d="M1 10c0-3 2-4 4-4M17 10c0-3-2-4-4-4M4 17c0-7 10-7 10 0" /></G><span>グループの参照</span></Small>
          </Stack>
          <h3>グループ</h3>
        </Group>
        <Group>
          <Stack $pt={1} $gap={7} $pl={9}>
            <Cells $cols="194px"><PeopleInput aria-label="ユーザーの検索" placeholder="ユーザーの検索" /></Cells>
            <Small><G w={20} h={18}><path d="M4 1h12v16H4z" /><circle cx="10" cy="7" r="2.500" /><path d="M6 14c0-5 8-5 8 0" /></G><span>アドレス帳</span></Small>
            <Small><G w={20} h={18}><path d="M2 1h16l-6 8v5l-4 3V9z" fill="#fff" /></G><span>電子メールのフィルター処理</span><Chev /></Small>
          </Stack>
          <h3>検索</h3>
        </Group>
        <Group>
          <Cells $cols="1fr"><Big><G w={34}><path d="M2 33L12 4h2l10 29M6 23h15" /><path d="M22 8c2 3 2 6 0 9M26 5c4 5 4 10 0 15M30 2c5 7 5 14 0 21" stroke="#2b88d8" /></G><span>音声読<br />み上げ</span></Big></Cells>
          <h3>音声</h3>
        </Group>
        <Group>
          <Cells $cols="1fr">
            <Big>
              <svg width="36" height="36" viewBox="0 0 36 36" aria-hidden="true">
                <text x="17" y="17" fontSize="16" fontWeight="700" fill="#107c10" fontFamily="Noto Sans CJK JP, sans-serif">あ</text>
                <text x="2" y="31" fontSize="20" fontWeight="700" fill="#0f6cbd" fontFamily="Noto Sans, sans-serif">a</text>
                <path d="M2 6l3 3c3-2 6-3 9-2v4c-3-1-4 0-6 2l3 3H2z" fill="#0f6cbd" />
                <path d="M33 33l-3-3c-3 2-6 3-9 1v-4c3 1 4 0 6-2l-3-3h9z" fill="#107c10" />
              </svg>
              <span>翻訳<Row $h={18}><Chev /></Row></span>
            </Big>
          </Cells>
          <h3>言語</h3>
        </Group>
        <Group>
          <Cells $cols="1fr">
            <Big>
              <svg width="34" height="34" aria-hidden="true"><rect x="7" y="2" width="26" height="29" rx="1" fill="#c54fe8" /><rect x="26" y="2" width="7" height="10" fill="#d98cf0" /><rect x="26" y="20" width="7" height="11" fill="#7a1fa8" /><rect x="1" y="8" width="17" height="17" rx="1" fill="#7719aa" /><path d="M6.500 20.500v-8l6 8v-8" stroke="#fff" strokeWidth="1.800" fill="none" /></svg>
              <span>OneNote<br />に送る</span>
            </Big>
          </Cells>
          <h3>OneNote</h3>
        </Group>
        <Group>
          <Cells $cols="1fr">
            <Big>
              <svg width="34" height="34" fill="none" stroke="#5b8ff9" strokeWidth="1.800" aria-hidden="true"><path d="M17 32L3 20c-4-6 4-11 9-6l8 8" /><path d="M17 32l14-12c4-6-4-11-9-6L10 26" /><circle cx="17" cy="9" r="7.500" /></svg>
              <span>Viva イ<br />ンサイト</span>
            </Big>
          </Cells>
          <h3>アドイン</h3>
        </Group>
        <Row $align="flex-end" $justify="flex-end" $pad="0 12px 8px 0"><Chev d="up" s={10} /></Row>
      </Groups>
    </Ribbon>

    <InfoBar>
      <svg width="26" height="26" aria-hidden="true"><circle cx="13" cy="13" r="12" fill="#fff" stroke="#2b88d8" strokeWidth="1.400" /><path d="M13 11v9M13 6v3" stroke="#2b88d8" strokeWidth="2.400" /></svg>
      <b>自動応答</b>
      <p>このアカウントでは自動応答が送信されます。</p>
      <button>オフ</button>
      <button aria-label="閉じる"><svg width="9" height="9" stroke="#555" strokeWidth="2"><path d="M1 1l7 7M8 1L1 8" /></svg></button>
    </InfoBar>

    <Panes>
      <FolderPane>
        <Row $h={18} $justify="flex-end" $pad="0 12px 0 0"><Chev d="left" w={2} /></Row>
        <FolderRow href="#fav" $size={16} $h={32}><Chev s={12} w={1} />お気に入り</FolderRow>
        {['送信済みアイテム', '下書き', '削除済みアイテム'].map(t => <FolderRow key={t} href="#f"><i />{t}</FolderRow>)}
        <Rule />
        <FolderRow href="#acct" $size={18}><Chev s={12} w={1} />yano.mch@om.asahi…</FolderRow>
        {folders.map((f, i) => (
          <FolderRow key={i} href="#f" $on={f.on} $indent={f.indent}>
            {f.chev ? <Chev d={f.chev} s={10} w={1.1} /> : <i />}
            {f.t}
            {f.n && <Count $plain={f.plain}>{f.n}</Count>}
          </FolderRow>
        ))}
        <Spaced $t={9} />
        <FolderRow href="#grp" $bold><Chev d="right" s={10} w={1.1} />グループ</FolderRow>
        <Push />
        <FolderRow href="#arch" $size={16} $h={40}><Chev d="right" s={11} w={1} />オンライン アーカイブ - ya…</FolderRow>
        <Modules>
          <svg width="22" height="18" fill="#a9d3f2" stroke="#106ebe" strokeWidth="1.400"><rect x="1" y="1" width="20" height="16" /><path d="M1 1l10 8 10-8" /></svg>
          <svg width="22" height="22" fill="none" stroke="#444" strokeWidth="1.400"><path d="M1 3h20v18H1zM1 7h20M5 0v5M17 0v5" /><path d="M5 11.500h13M3 15h15M3 18.500h11" strokeDasharray="2 1.500" strokeWidth="2" /></svg>
          <svg width="24" height="22" fill="none" stroke="#444" strokeWidth="1.400"><circle cx="7" cy="11" r="4" /><path d="M1 22c1-9 11-9 12 0" /><circle cx="17" cy="5" r="4" /><path d="M12 14c2-6 10-5 11 1" /></svg>
          <svg width="20" height="22" fill="none" stroke="#444" strokeWidth="1.400"><path d="M2 3h16v18H2zM6 6V3h2c0-3 4-3 4 0h2v3z" /><path d="M6 14l3 3 5-6" /></svg>
          <svg width="22" height="6" fill="#444"><circle cx="3" cy="3" r="1.800" /><circle cx="11" cy="3" r="1.800" /><circle cx="19" cy="3" r="1.800" /></svg>
        </Modules>
      </FolderPane>

      <ListPane>
        <ListColumn>
          <ListHead>
            <Filter $on>すべて</Filter>
            <Filter>未読</Filter>
            <Sort>日付 <Chev s={11} w={1.2} /></Sort>
            <Row $h={34} $pad="0 0 0 18px"><svg width="10" height="14" fill="none" stroke="#444" strokeWidth="1.200"><path d="M5 14V1M1 5l4-4 4 4" /></svg></Row>
          </ListHead>
          <DayHead><Chev s={10} />今日</DayHead>
          {messages.map((m, i) => (
            <Message key={i} $unread={m.unread} $on={m.on}>
              <h4>{m.from}</h4>
              {m.clip ? <svg width="18" height="22" viewBox="0 0 18 22" fill="none" stroke="#444" strokeWidth="1.300"><path d="M11 6v9c0 2-4 2-4 0V5c0-5 7-5 7 0v11c0 6-9 6-9 0V6" /></svg> : <i />}
              <p>{m.sub}</p>
              <time>{m.at}</time>
              <small>{m.pre}</small>
            </Message>
          ))}
        </ListColumn>
        <ListScroll><Scroll thumb={27} /></ListScroll>
      </ListPane>

      <Reading>
        <ReadHead>
          <h2>パソコンIPアドレス</h2>
          <Avatar>
            <svg width="55" height="55" fill="none" stroke="#555" strokeWidth="1.600" aria-hidden="true"><circle cx="27.500" cy="27.500" r="27.500" fill="#d2d0ce" stroke="none" /><circle cx="27.500" cy="20" r="9" /><path d="M13 44c1-19 28-19 29 0" /></svg>
          </Avatar>
          <Who>
            <p>黒田  航平(Kuroda, Kohei)</p>
            <span>宛先</span><span>矢野  雅也(Yano, Masaya)</span>
          </Who>
          <div>
            <Actions>
              <ActionSet>
                <button><ReplyIco />返信</button>
                <button><ReplyIco all />全員に返信</button>
                <button><FwdIco />転送</button>
              </ActionSet>
              <ActionSet $tight><button aria-label="その他"><svg width="18" height="4" fill="#444"><circle cx="3" cy="2" r="1.800" /><circle cx="9" cy="2" r="1.800" /><circle cx="15" cy="2" r="1.800" /></svg></button></ActionSet>
            </Actions>
            <When>2023/02/21 (火) 10:30</When>
          </div>
        </ReadHead>
        <ReadBody>
          <Letter>
            <p>矢野さん　/　黒田</p>
            <p>お疲れ様です。</p>
            <p>延製のＩＰアドレスは下記をお使いください。<br />10.201.30.<mark>64</mark><br />255.255.254.0<br />10.201.31.251</p>
            <p>10.41.96.110<br />10.31.96.110</p>
            <p>もし使えない場合は再度違う番号をご連絡します。</p>
            <p>お手数お掛けしますが宜しくお願いします。</p>
            <Signature>＝＝＝＝＝＝＝＝＝＝＝＝＝＝＝＝＝＝＝<br />旭化成ファインケム株式会社<br />延岡管理室<br />黒田　航平</Signature>
          </Letter>
          <Scroll thumb={430} />
        </ReadBody>
      </Reading>
    </Panes>

    <StatusBar>
      <span>アイテム数: 175</span>
      <span>未読: 4</span>
      <Push />
      <span>すべてのフォルダーが最新の状態です。</span>
      <span>接続先: Microsoft Exchange</span>
      <Row $gap={5}><G w={15} h={17}><path d="M3 8V1h11v15H6M1 13c0-4 6-3 6 0M1 10v6" /></G>自動応答</Row>
      <Row>
        <ViewButton $on aria-label="標準"><G w={17} h={16}><path d="M1 1h15v14H1zM1 4h15M5 4v11M12 4v11" /></G></ViewButton>
        <ViewButton aria-label="閲覧"><G w={17} h={16}><path d="M8.500 3v12M1 2h6l1.500 1L10 2h6v12H1zM3 5h3M3 8h3M3 11h3M11 5h3M11 8h3M11 11h3" /></G></ViewButton>
      </Row>
      <Row $gap={6}><span>−</span><Zoom aria-label="ズーム" defaultValue={50} /><span>+</span></Row>
      <span>100%</span>
    </StatusBar>
  </Outlook>
);

/* ---------- taskbars ---------- */

const Taskbars = styled.div`
  display: grid;
  grid-template-columns: 1fr 1fr;
  flex: none;
  height: 47px;
  background: #1e2d39;
`;

const Taskbar = styled.nav`
  display: flex;
  min-width: 0;
  color: #fff;
`;

const TaskGroup = styled.div`
  display: flex;
  gap: 2px;
  margin-right: 4px;
`;

const TaskButton = styled.button<{ $run?: boolean; $on?: boolean }>`
  display: grid;
  place-items: center;
  width: 53px;
  height: 47px;
  padding-top: 2px;
  background: ${p => (p.$on ? '#4b5761' : 'none')};
  ${p => p.$run && css`border-bottom: 2px solid #76b9ed;`}
`;

const Tray = styled.div`
  display: flex;
  align-items: center;
  gap: 9px;
  margin-left: auto;
`;

const Clock = styled.time<{ $w: number }>`
  width: ${p => p.$w}px;
  padding-top: 1px;
  text-align: center;
  line-height: 22px;
  font-size: 13px;
`;

const TaskIcons = () => (
  <>
    <TaskGroup>
      <TaskButton aria-label="スタート"><svg width="19" height="19" fill="#fff"><path d="M0 2.700L8 1.600v7.400H0zM9 1.400L19 0v9H9zM0 10h8v7.400l-8-1.100zM9 10h10v9L9 17.600z" /></svg></TaskButton>
      <TaskButton aria-label="検索"><svg width="20" height="20" fill="none" stroke="#fff" strokeWidth="1.500"><circle cx="12" cy="7.500" r="6.500" /><path d="M7.500 12.500L1 19" /></svg></TaskButton>
      <TaskButton aria-label="タスク ビュー"><svg width="21" height="20" fill="none" stroke="#fff" strokeWidth="1.600"><path d="M1 1v2h12V1M1 7h12v6H1zM1 19v-2h12v2M18 0v20" /><path d="M16 6h4" strokeWidth="3" /></svg></TaskButton>
    </TaskGroup>
    <TaskGroup>
      <TaskButton aria-label="エクスプローラー"><svg width="27" height="23"><path d="M1 1h9l2 3h14v17H1z" fill="#f0b429" /><path d="M1 7h25v15H1z" fill="#fcd975" /><path d="M6 22v-8h15v8h-4v-4h-7v4z" fill="#2f8fdd" /></svg></TaskButton>
      <TaskButton $run aria-label="Outlook"><svg width="30" height="30"><rect x="9" y="1" width="17" height="23" fill="#28a8ea" /><path d="M9 12h17v12H9z" fill="#1066b5" /><path d="M17 1h9v8h-9z" fill="#50d9ff" /><rect x="2" y="7" width="14" height="14" rx="1" fill="#0f64ba" /><circle cx="9" cy="14" r="3.500" fill="none" stroke="#fff" strokeWidth="1.800" /><rect x="13" y="18" width="17" height="12" fill="#fbc878" stroke="#b46a12" /><path d="M13 18l8.500 6 8.500-6" fill="none" stroke="#b46a12" /></svg></TaskButton>
      <TaskButton $run aria-label="Edge"><svg width="27" height="27" viewBox="0 0 37 37"><EdgeShape /></svg></TaskButton>
      <TaskButton $run aria-label="リモート"><svg width="28" height="28"><path d="M2 3l13-2v25L2 22z" fill="#2f9be4" /><path d="M4 5l9-1v15l-9-1z" fill="#8fd3fb" /><circle cx="20" cy="9" r="7" fill="#d4e8f5" stroke="#6ca4c8" /><path d="M14 16l11-2v9l-7 4z" fill="#c7d2da" /></svg></TaskButton>
      <TaskButton $run $on aria-label="ネットワーク"><svg width="24" height="20"><rect x="0.500" y="0.500" width="23" height="19" fill="#63c1f2" stroke="#d6effc" /><path d="M3 4h18v7H3z" fill="#d9f1fd" /><path d="M4 7h5M11 7h9M4 15h4M10 15h10" stroke="#1b6fae" strokeWidth="2" /></svg></TaskButton>
    </TaskGroup>
  </>
);

const TrayIcons = () => (
  <>
    <svg width="18" height="18"><path d="M1 5h11v6H1z" fill="#39b54a" /><path d="M5 9h12v5H5z" fill="#e9eef1" /></svg>
    <svg width="18" height="18"><path d="M1 3h15v12H1z" fill="#fbc878" /><path d="M1 3l7.500 6L16 3" fill="none" stroke="#8a5a14" /></svg>
    <svg width="18" height="18"><rect x="5" y="2" width="12" height="13" fill="#28a8ea" /><rect x="1" y="5" width="9" height="9" fill="#0f64ba" /><circle cx="5.500" cy="9.500" r="2" fill="none" stroke="#fff" strokeWidth="1.200" /></svg>
    <svg width="18" height="18"><circle cx="9" cy="9" r="8" fill="#8ec7e2" /><path d="M4 5l6 2 3 7-7 1z" fill="#3c8ab0" /></svg>
    <svg width="18" height="18"><circle cx="8" cy="8" r="7" fill="#1ea4e8" /><path d="M3 9c3-5 7-5 11-2" stroke="#fff" fill="none" strokeWidth="2" /><circle cx="13" cy="13" r="4.500" fill="#39b54a" /></svg>
    <svg width="18" height="18"><rect x="1" y="1" width="16" height="16" fill="#dde2e5" /><path d="M4 4h6v4H4z" fill="#e2574c" /><path d="M8 8h6v6H8z" fill="#3aa76d" /></svg>
    <svg width="18" height="18"><ellipse cx="9" cy="9" rx="6.500" ry="8.500" fill="#0a84ff" /><path d="M5.500 5.500l7 7L9 15.500v-13l3.500 3-7 7" fill="none" stroke="#fff" strokeWidth="1.200" /></svg>
    <svg width="19" height="18"><path d="M2 5h15v8H2z" fill="#fff" /><path d="M0 3h5v4H0z" fill="#fff" /></svg>
    <svg width="18" height="18" fill="none" stroke="#dfe5e9" strokeWidth="1.300"><path d="M2 16C3 9 8 4 16 2M6 16c1-5 4-8 10-9M10 16c1-3 3-4 6-4" /></svg>
    <svg width="18" height="18" fill="none" stroke="#fff" strokeWidth="1.200"><path d="M1 7h2l4-4v12l-4-4H1zM10 6c2 2 2 4 0 6M12.500 4c3 3 3 7 0 10M15 2c4 4 4 10 0 14" /></svg>
  </>
);

const Ime = styled.span`
  width: 20px;
  margin-right: 7px;
  text-align: center;
  font-size: 19px;
`;

const NoticeButton = styled.button`
  position: relative;
  width: 34px;
  height: 40px;
  margin-right: 18px;
  span {
    position: absolute;
    right: 2px;
    bottom: 4px;
    width: 16px;
    height: 16px;
    border: 1px solid #ccc;
    border-radius: 50%;
    background: #3a4650;
    font-size: 11px;
    line-height: 14px;
  }
`;

export default function App() {
  return (
    <Desktop>
      <Global />
      <IconGrid>
        {shortcuts.map((s, i) => (
          <Shortcut key={i}>{s.icon}<ShortcutLabel $latin={s.latin}>{s.text}</ShortcutLabel></Shortcut>
        ))}
      </IconGrid>
      <Taskbars>
        <Taskbar>
          <TaskIcons />
          <Tray>
            <TrayIcons />
            <Ime>A</Ime>
            <Clock $w={74}>11:18<br />2023/02/21</Clock>
            <NoticeButton aria-label="通知"><svg width="20" height="20" fill="#fff"><path d="M0 0h20v14h-9l-4 5v-5H0z" /><path d="M3 4h14M3 7h14M3 10h9" stroke="#1e2d39" /></svg><span>7</span></NoticeButton>
          </Tray>
        </Taskbar>
        <Taskbar>
          <TaskIcons />
          <Tray><Clock $w={90}>11:18<br />2023/02/21</Clock></Tray>
        </Taskbar>
      </Taskbars>

      <NetworkCenterWindow />
      <Win $x={721} $y={216} $w={478} $h={639}>
        <TitleBar $dim $pad={10}><PlugIcon /><h2>イーサネットの状態</h2><GlyphButton aria-label="閉じる"><Cross /></GlyphButton></TitleBar>
        <Spaced $t={10} />
        <Sheet>全般</Sheet>
        <Spaced $t={53} />
      </Win>
      <Win $x={739} $y={233} $w={495} $h={712}>
        <TitleBar $dim $pad={10}><PlugIcon /><h2>イーサネットのプロパティ</h2><GlyphButton aria-label="閉じる"><Cross /></GlyphButton></TitleBar>
        <Spaced $t={10} />
        <Sheet $pad="2px 16px 0 8px">
          <span>ネットワーク</span>
          <Spaced $t={24} $x={9}>接続の方法:</Spaced>
          <Spaced $t={8} $x={9}>
            <Ghost $t={0} $h={42} />
            <Ghost $t={72} $h={204} />
            <Ghost $t={12} $h={31} />
            <Ghost $t={18} $h={89} />
          </Spaced>
        </Sheet>
        <Footer>
          <PushButton $w={98}>OK</PushButton>
          <PushButton $w={98}>キャンセル</PushButton>
        </Footer>
      </Win>
      <Ipv4Window />
      <OutlookWindow />
    </Desktop>
  );
}
